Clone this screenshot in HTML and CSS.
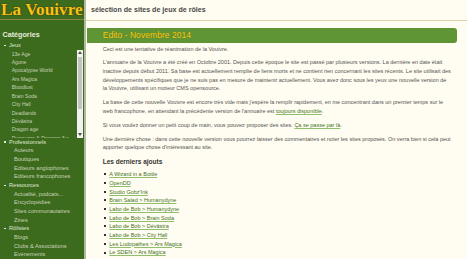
FILE: index.html
```html
<!DOCTYPE html>
<html lang="fr">
<head>
<meta charset="utf-8">
<title>La Vouivre</title>
<link rel="stylesheet" href="styles.css">
</head>
<body>
<div class="page">
  <aside class="sidebar">
    <div class="logo">La Vouivre</div>
    <h2 class="cat-title">Catégories</h2>
    <ul class="cats">
      <li class="cat"><span class="cat-name">Jeux</span>
        <div class="scrollbox">
          <ul class="sub-scroll">
            <li>13e Age</li>
            <li>Agone</li>
            <li>Apocalypse World</li>
            <li>Ars Magica</li>
            <li>Bloodlust</li>
            <li>Brain Soda</li>
            <li>City Hall</li>
            <li>Deadlands</li>
            <li>Dévâstra</li>
            <li>Dragon age</li>
            <li>Dungeons &amp; Dragons 3.x</li>
            <li>Dungeons &amp; Dragons 4</li>
          </ul>
          <div class="sbar">
            <div class="sbtn"><svg width="4" height="3" viewBox="0 0 4 3"><path d="M0 3 L2 0 L4 3 Z" fill="#505050"/></svg></div>
            <div class="strack"><div class="sthumb"></div></div>
            <div class="sbtn"><svg width="4" height="3" viewBox="0 0 4 3"><path d="M0 0 L2 3 L4 0 Z" fill="#505050"/></svg></div>
          </div>
        </div>
      </li>
      <li class="cat"><span class="cat-name">Professionnels</span>
        <ul class="sub">
          <li>Auteurs</li>
          <li>Boutiques</li>
          <li>Editeurs anglophones</li>
          <li>Editeurs francophones</li>
        </ul>
      </li>
      <li class="cat"><span class="cat-name">Ressources</span>
        <ul class="sub">
          <li>Actualité, podcats...</li>
          <li>Encyclopédies</li>
          <li>Sites communautaires</li>
          <li>Zines</li>
        </ul>
      </li>
      <li class="cat"><span class="cat-name">Rôlistes</span>
        <ul class="sub">
          <li>Blogs</li>
          <li>Clubs &amp; Associations</li>
          <li>Evènements</li>
        </ul>
      </li>
    </ul>
  </aside>
  <main class="main">
    <div class="tagline">sélection de sites de jeux de rôles</div>
    <div class="article">
      <h1 class="bar">Edito - Novembre 2014</h1>
      <div class="body">
        <p>Ceci est une tentative de réanimation de la Vouivre.</p>
        <p>L'annuaire de la Vouivre a été créé en Octobre 2001. Depuis cette époque le site est passé par plusieurs versions. La dernière en date était inactive depuis début 2011. Sa base est actuellement remplie de liens morts et ne contient rien concernant les sites récents. Le site utilisait des développements spécifiques que je ne suis pas en mesure de maintenir actuellement. Vous avez donc sous les yeux une nouvelle version de la Vouivre, utilisant un moteur CMS opensource.</p>
        <p>La base de cette nouvelle Vouivre est encore très vide mais j'espère la remplir rapidement, en me concentrant dans un premier temps sur le web francophone, en attendant la précédente version de l'annuaire est <a href="#">toujours disponible</a>.</p>
        <p>Si vous voulez donner un petit coup de main, vous pouvez proposer des sites. <a href="#">Ça se passe par là</a>.</p>
        <p>Une dernière chose : dans cette nouvelle version vous pourrez laisser des commentaires et noter les sites proposés. On verra bien si cela peut apporter quelque chose d'intéressant au site.</p>
        <h3 class="latest-title">Les derniers ajouts</h3>
        <ul class="latest">
          <li><a href="#">A Wizard in a Bottle</a></li>
          <li><a href="#">OpenDD</a></li>
          <li><a href="#">Studio Gobz'Ink</a></li>
          <li><a href="#">Brain Salad &gt; Humanydyne</a></li>
          <li><a href="#">Labo de Bob &gt; Humanydyne</a></li>
          <li><a href="#">Labo de Bob &gt; Brain Soda</a></li>
          <li><a href="#">Labo de Bob &gt; Dévâstra</a></li>
          <li><a href="#">Labo de Bob &gt; City Hall</a></li>
          <li><a href="#">Les Ludopathes &gt; Ars Magica</a></li>
          <li><a href="#">Le SDEN &gt; Ars Magica</a></li>
        </ul>
      </div>
    </div>
  </main>
</div>
</body>
</html>
```
FILE: styles.css
```css
html, body {
  margin: 0;
  padding: 0;
  height: 100%;
  overflow: hidden;
}
body {
  background: #fffcf1;
  font-family: "Liberation Sans", Arial, sans-serif;
  font-size: 5.5px;
  color: #545454;
}
ul {
  list-style: none;
  margin: 0;
  padding: 0;
}
.page {
  display: flex;
  min-height: 100vh;
}
.sidebar {
  width: 84px;
  flex: 0 0 84px;
  background: #3d6b1e;
  border-right: 2px solid #aebb9c;
  color: #dfe8d3;
  font-size: 5.65px;
}
.logo {
  height: 19px;
  line-height: 19px;
  padding-left: 1px;
  border-bottom: 1px solid #8a8a3c;
  font-family: "Liberation Serif", serif;
  font-weight: bold;
  font-size: 17.3px;
  color: #f3c416;
  text-shadow: 0 0 1px #4a3200, 0 0 1px #4a3200;
  white-space: nowrap;
}
.cat-title {
  margin: 10px 0 1px 2.5px;
  font-size: 7.2px;
  line-height: 10px;
  font-weight: bold;
  color: #e6eddc;
}
.cat {
  line-height: 8.67px;
}
.cat-name {
  display: block;
  padding-left: 9px;
  position: relative;
}
.cat-name::before {
  content: "";
  position: absolute;
  left: 4px;
  top: 3.6px;
  width: 1.5px;
  height: 1.5px;
  background: #e0e8d6;
}
.sub {
  color: #c6d2b6;
  padding-left: 14px;
  white-space: nowrap;
}
.scrollbox {
  display: flex;
  height: 88px;
  margin-left: 9px;
  margin-right: 0.7px;
}
.sub-scroll {
  flex: 1;
  min-width: 0;
  padding-left: 2.7px;
  overflow: hidden;
  font-size: 5.1px;
  line-height: 8.4px;
  white-space: nowrap;
  color: #c6d2b6;
}
.sbar {
  width: 6.6px;
  flex: 0 0 6.6px;
  background: #f1f1f1;
  display: flex;
  flex-direction: column;
}
.sbtn {
  height: 6px;
  display: flex;
  align-items: center;
  justify-content: center;
}
.strack {
  flex: 1;
  padding: 1px;
}
.sthumb {
  height: 52px;
  background: #c3c3c3;
}
.main {
  flex: 1;
  min-width: 0;
}
.tagline {
  height: 20px;
  line-height: 20px;
  padding-left: 5px;
  border-bottom: 1px solid #ddd1aa;
  font-weight: bold;
  font-size: 7.1px;
  color: #484848;
  white-space: nowrap;
}
.article {
  padding: 7px 10px 0 1px;
}
.bar {
  margin: 0 0 1.5px 0;
  height: 15px;
  line-height: 15px;
  padding-left: 15.7px;
  background: #5f9535;
  border-radius: 0 3px 3px 0;
  font-weight: normal;
  font-size: 8.6px;
  color: #f2c81a;
  text-shadow: 0 0 1px #6f7a10;
}
.body {
  padding-left: 15.7px;
  padding-right: 5px;
}
.body p {
  margin: 0 0 5.2px 0;
  line-height: 8.67px;
}
.body a {
  color: #3f7424;
  text-decoration: underline;
  text-decoration-color: #8fbf6a;
}
.latest-title {
  margin: 4px 0 3px 0;
  font-size: 6.5px;
  line-height: 10px;
  font-weight: bold;
  color: #353535;
}
.latest li {
  position: relative;
  padding-left: 6.6px;
  line-height: 8.67px;
}
.latest li::before {
  content: "";
  position: absolute;
  left: 1.3px;
  top: 3.3px;
  width: 2px;
  height: 2px;
  background: #333;
}
```
